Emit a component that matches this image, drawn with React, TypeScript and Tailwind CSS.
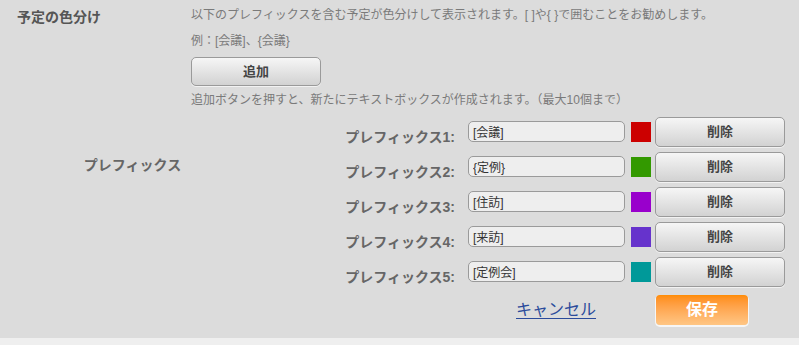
import React from "react";

const prefixes = [
  { label: "プレフィックス1:", value: "[会議]", color: "bg-[#cc0000]" },
  { label: "プレフィックス2:", value: "{定例}", color: "bg-[#339900]" },
  { label: "プレフィックス3:", value: "[住訪]", color: "bg-[#9900cc]" },
  { label: "プレフィックス4:", value: "[来訪]", color: "bg-[#6633cc]" },
  { label: "プレフィックス5:", value: "[定例会]", color: "bg-[#009999]" },
];

const font = "font-['Liberation_Sans','Noto_Sans_CJK_JP',sans-serif]";

const GrayButton = ({ label, className }: { label: string; className?: string }) => (
  <button
    className={`rounded-[5px] border border-[#9a9a9a] bg-gradient-to-b from-[#f6f6f6] to-[#d2d2d2] text-[13px] font-bold text-[#444] shadow-[0_1px_0_#f2f2f2] ${className}`}
  >
    {label}
  </button>
);

export default function App() {
  return (
    <div className={`${font} w-[799px] h-[345px] bg-[#dcdcdc] overflow-hidden`}>
      {/* 説明ブロック */}
      <div className="flex">
        <div className="w-[191px] shrink-0 pl-[17px] pt-[7px] text-[14px] font-bold leading-[20px] text-[#555]">
          予定の色分け
        </div>
        <div className="flex flex-col items-start text-[12px] text-[#7a7a7a]">
          <p className="mt-[6px] leading-[18px]">
            以下のプレフィックスを含む予定が色分けして表示されます。[ ]や{"{ }"}で囲むことをお勧めします。
          </p>
          <p className="mt-[8px] leading-[18px]">例：[会議]、{"{会議}"}</p>
          <GrayButton label="追加" className="mt-[7px] h-[29px] w-[130px]" />
          <p className="mt-[5px] leading-[18px]">
            追加ボタンを押すと、新たにテキストボックスが作成されます。（最大10個まで）
          </p>
        </div>
      </div>

      {/* プレフィックス一覧 */}
      <div className="mt-[8px] flex">
        <div className="w-[265px] shrink-0 pt-[38px] text-center text-[14px] font-bold leading-[20px] text-[#666]">
          プレフィックス
        </div>
        <div className="flex flex-col gap-[5px]">
          {prefixes.map((p) => (
            <div key={p.label} className="flex h-[30px] items-center">
              <div className="w-[190px] pt-[10px] text-right text-[14px] font-bold leading-[20px] text-[#666]">
                {p.label}
              </div>
              <input
                readOnly
                value={p.value}
                className="ml-[13px] mt-[-2px] h-[21px] w-[157px] rounded-[5px] border border-[#9a9a9a] bg-[#eeeeee] px-[4px] text-[12px] text-[#333] outline-none"
              />
              <div className={`ml-[6px] h-[20px] w-[20px] ${p.color}`} />
              <GrayButton label="削除" className="ml-[4px] h-[30px] w-[130px]" />
            </div>
          ))}
          <div className="mt-[3px] flex h-[30px] items-center">
            <a className="ml-[251px] text-[16px] leading-[20px] text-[#2b4b9b] underline underline-offset-[3px]">
              キャンセル
            </a>
            <button className="ml-[60px] h-[30px] w-[92px] rounded-[4px] bg-gradient-to-b from-[#ff8c00] to-[#ffc684] text-[16px] font-bold text-white shadow-[0_1px_0_1px_#f6f6f6]">
              保存
            </button>
          </div>
        </div>
      </div>

      <div className="mt-[13px] h-[20px] bg-[#efefef]" />
    </div>
  );
}
